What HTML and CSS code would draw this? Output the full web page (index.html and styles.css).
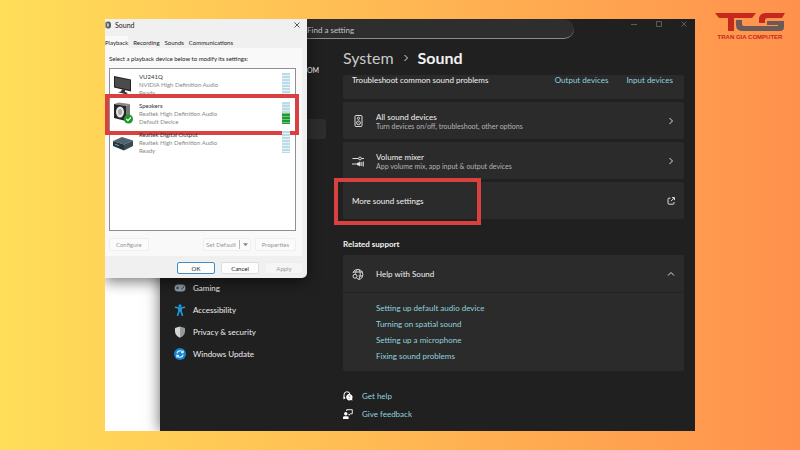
FILE: index.html
```
<!DOCTYPE html>
<html lang="en">
<head>
	<meta charset="utf-8">
	<title>More sound settings</title>
	<link rel="stylesheet" href="styles.css">
</head>
<body>
	<div class="desktop">
		<!-- settings window -->
		<div class="settings">
			<div class="titlebar">
				<input type="text" class="search" placeholder="Find a setting" aria-label="Find a setting">
				<div class="controls">
					<button type="button" aria-label="Minimize"><svg viewBox="0 0 8 8"><path d="M1 4.5h6"/></svg></button>
					<button type="button" aria-label="Maximize"><svg viewBox="0 0 8 8"><path d="M1.5 1.5h5v5h-5z"/></svg></button>
					<button type="button" aria-label="Close"><svg viewBox="0 0 8 8"><path d="M1.5 1.5l5 5M6.5 1.5l-5 5"/></svg></button>
				</div>
			</div>
			<div class="columns">
				<div class="sidebar">
					<div class="account">OM</div>
					<div class="selected"></div>
					<nav class="menu">
						<a href="#"><svg viewBox="0 0 12 12"><rect x="0.5" y="2.5" width="11" height="7" rx="3.5" fill="#8d99a5"/><path d="M2.3 6h2.4M3.5 4.8v2.4" stroke="#2c3640" fill="none"/><circle cx="8" cy="6.8" r="0.7" fill="#2c3640"/><circle cx="9.3" cy="5.2" r="0.7" fill="#2c3640"/></svg>Gaming</a>
						<a href="#"><svg viewBox="0 0 12 12"><circle cx="6" cy="1.7" r="1.5" fill="#2196dc"/><path d="M1.6 3.3L6 4.4l4.4-1.1M6 4v3M4.9 4.5v3L3.6 11.2M7.1 4.5v3l1.3 3.7" stroke="#2196dc" stroke-width="1.7" stroke-linecap="round" fill="none"/></svg>Accessibility</a>
						<a href="#"><svg viewBox="0 0 12 12"><path d="M6 0.5L11 2v3.6C11 8.5 8.8 10.6 6 11.8z" fill="#96999b"/><path d="M6 0.5L1 2v3.6C1 8.5 3.2 10.6 6 11.8z" fill="#d2d5d6"/></svg>Privacy &amp; security</a>
						<a href="#"><svg viewBox="0 0 12 12"><circle cx="6" cy="6" r="6" fill="#1283d0"/><path d="M2.9 5.4a3.2 3.2 0 0 1 5.8-1.2M9.1 2.6v2H7.1M9.1 6.6a3.2 3.2 0 0 1-5.8 1.2M2.9 9.4v-2h2" stroke="#d8f1ff" stroke-width="1.2" fill="none"/></svg>Windows Update</a>
					</nav>
				</div>
				<div class="main">
					<h1 class="head"><span>System</span><svg viewBox="0 0 8 8"><path d="M2.5 1l3 3-3 3"/></svg><b>Sound</b></h1>
					<div class="cards">
						<div class="card trouble">
							<span class="grow">Troubleshoot common sound problems</span>
							<a href="#">Output devices</a>
							<a href="#">Input devices</a>
						</div>
						<div class="card">
							<svg class="icon" viewBox="0 0 12 12"><rect x="3" y="0.5" width="7" height="11" rx="1"/><circle cx="6.5" cy="3.3" r="1.1"/><circle cx="6.5" cy="7.8" r="1.9"/><path d="M6.5 7.5v.6"/></svg>
							<div class="grow"><div>All sound devices</div><div class="sub">Turn devices on/off, troubleshoot, other options</div></div>
							<svg class="arrow" viewBox="0 0 8 8"><path d="M2.5 1l3 3-3 3"/></svg>
						</div>
						<div class="card">
							<svg class="icon" viewBox="0 0 12 12"><path d="M0.5 3.5h6M9.5 3.5h2.5M0 9h5"/><circle cx="8" cy="3.5" r="1.4"/><path d="M5.5 8h1L8 7v4L6.5 10h-1z" fill="#eee"/><path d="M9.8 7v4M11.3 6.5v5"/></svg>
							<div class="grow"><div>Volume mixer</div><div class="sub">App volume mix, app input &amp; output devices</div></div>
							<svg class="arrow" viewBox="0 0 8 8"><path d="M2.5 1l3 3-3 3"/></svg>
						</div>
						<div class="card more">
							<span class="grow">More sound settings</span>
							<svg class="arrow" viewBox="0 0 8 8"><path d="M3.5 1.2H2q-1 0-1 1v4q0 1 1 1h4q1 0 1-1V5M5 .6h2.5v2.5M7.3.8L4 4.2"/></svg>
							<div class="mark mark-more"></div>
						</div>
					</div>
					<h2 class="related">Related support</h2>
					<div class="help">
						<div class="card">
							<svg class="icon" viewBox="0 0 12 12"><path d="M1 5a5 5 0 1 1 5.5 6.5M6 1C3.8 2.8 3.6 4.5 3.6 5.5M6.2 1c2.4 2 2.8 6.5.5 10.4M1.3 4h9.6M6.5 8h4.5"/><circle cx="3" cy="8.2" r="2"/><path d="M4.5 9.7l1.8 1.8"/></svg>
							<span class="grow">Help with Sound</span>
							<svg class="arrow" viewBox="0 0 8 8"><path d="M1 5.5l3-3 3 3"/></svg>
						</div>
						<div class="links">
							<a href="#">Setting up default audio device</a>
							<a href="#">Turning on spatial sound</a>
							<a href="#">Setting up a microphone</a>
							<a href="#">Fixing sound problems</a>
						</div>
					</div>
					<div class="bottom">
						<a href="#"><svg viewBox="0 0 10 10"><path d="M1 7.5V4a3 3 0 0 1 6-.5" fill="none" stroke="#fff"/><path d="M0.5 8.5l.2-3 2 1.5z" fill="#fff"/><path d="M6.2 3a3.2 3.2 0 1 0 1.7 6l1.6.5-.4-1.7A3.2 3.2 0 0 0 6.2 3z" fill="#fff"/><path d="M5.6 5q1.3-.6 1.2.5l-.6.7M6.2 7.4v.6" stroke="#333" stroke-width=".6" fill="none"/></svg>Get help</a>
						<a href="#"><svg viewBox="0 0 10 10"><circle cx="2.8" cy="4.8" r="1.7" fill="#fff"/><path d="M0 10V8.5Q0 7.2 1.3 7.2h3q1.3 0 1.3 1.3V10z" fill="#fff"/><path d="M3.7 2V.7h5.6v4.1H7.5L6 6.2V4.8" fill="none" stroke="#fff" stroke-width=".9"/></svg>Give feedback</a>
					</div>
				</div>
			</div>
		</div>

		<!-- sound dialog -->
		<div class="dialog">
			<div class="dialog-title">
				<svg viewBox="0 0 8 8"><path d="M0 1l3-.5v7L0 7z" fill="#aaa"/><ellipse cx="3.5" cy="4" rx="2.5" ry="3.5" fill="#555"/><ellipse cx="3" cy="4" rx="1" ry="2" fill="#ccc"/></svg>
				<span class="grow">Sound</span>
				<button type="button" class="close" aria-label="Close"><svg viewBox="0 0 8 8"><path d="M1.5 1.5l5 5M6.5 1.5l-5 5"/></svg></button>
			</div>
			<div class="tabs">
				<button type="button" class="active">Playback</button>
				<button type="button">Recording</button>
				<button type="button">Sounds</button>
				<button type="button">Communications</button>
			</div>
			<div class="panel">
				<p>Select a playback device below to modify its settings:</p>
				<div class="devices">
					<div class="device">
						<svg viewBox="0 0 20 22"><path d="M1 3l17 3.5v12L1 14.5z" fill="#222"/><path d="M2 4.3l15 3v9.8L2 13.5z" fill="#4b4b4b"/><path d="M9 16.2l3 .8v2l3 1-2 1.2-8-2 3-.7z" fill="#333"/></svg>
						<div class="grow"><b>VU241Q</b><br>NVIDIA High Definition Audio<br>Ready</div>
						<div class="meter"></div>
					</div>
					<div class="device">
						<svg viewBox="0 0 20 22"><path d="M1 2L6 .5l11 1.5L13 4z" fill="#888"/><path d="M13 4l4-2v14l-4 3z" fill="#777"/><path d="M1 2l12 2v15L1 16z" fill="#252525"/><ellipse cx="7" cy="10" rx="4" ry="5.5" fill="#e2e2e2"/><ellipse cx="7" cy="10" rx="2" ry="3" fill="#aaa"/><circle cx="15.5" cy="17" r="4.5" fill="#1b9a2c"/><path d="M13.3 17l1.6 1.7 3-3.2" stroke="#fff" stroke-width="1.2" fill="none"/></svg>
						<div class="grow"><b>Speakers</b><br>Realtek High Definition Audio<br>Default Device</div>
						<div class="meter playing"></div>
						<div class="mark mark-device"></div>
					</div>
					<div class="device">
						<svg viewBox="0 0 20 22"><path d="M0 10l9-4 11 3.5-9 4z" fill="#52636e"/><path d="M0 10l11 3.5v6L0 15z" fill="#26343d"/><path d="M11 13.5l9-4V15l-9 4.5z" fill="#3a4b56"/><path d="M2 13.2l4 1.5" stroke="#58a9c8"/></svg>
						<div class="grow"><b>Realtek Digital Output</b><br>Realtek High Definition Audio<br>Ready</div>
						<div class="meter"></div>
					</div>
				</div>
				<div class="actions">
					<button type="button" disabled>Configure</button>
					<span class="grow"></span>
					<button type="button" class="split" disabled>Set Default <i></i><svg viewBox="0 0 6 4"><path d="M0 0h6L3 3.5z"/></svg></button>
					<button type="button" disabled>Properties</button>
				</div>
			</div>
			<div class="dialog-footer">
				<button type="button" class="ok">OK</button>
				<button type="button">Cancel</button>
				<button type="button" disabled>Apply</button>
			</div>
		</div>
	</div>

	<div class="logo">
		<svg viewBox="0 0 70 19"><path d="M0 0h41l-4 5H19v13h-6V5H4z" fill="#c5281c"/><path d="M70 0H51q-6 0-7 5v5h6V7q0-2 3-2h14z" fill="#c5281c"/><path d="M21 7h6v4q0 2 2 2h34v-1H52V8h17v6q0 4-4 4H28q-7 0-7-6z" fill="#6b5a55"/></svg>
		<span>TRAN GIA COMPUTER</span>
	</div>
</body>
</html>
```

FILE: styles.css
```
*{
	box-sizing:border-box;
}
body{
	margin:0;
	min-height:100vh;
	display:grid;
	grid-template-columns:105px 1fr 105px;
	padding:19px 0;
	background:linear-gradient(90deg, #ffde59, #ff914d);
	font-family:Lato, "Open Sans", sans-serif;
	font-size:8px;
	line-height:10px;
}
a{
	color:#8fd3df;
	text-decoration:none;
}
button{
	font:inherit;
	padding:0;
	border:none;
	background:none;
}
svg{
	flex:none;
}
.grow{
	flex:1;
}
.desktop{
	grid-column:2;
	position:relative;
	overflow:hidden;
	background:#fff;
}

/* settings window */
.settings{
	min-height:100%;
	margin-left:55px;
	background:#202020;
	color:#f2f2f2;
	box-shadow:0 0 14px rgba(0,0,0,0.6);
}
.titlebar{
	display:flex;
	align-items:flex-start;
	justify-content:space-between;
}
.search{
	flex:0 1 374px;
	min-width:0;
	height:20px;
	margin-left:40px;
	padding:2px 0 0 107px;
	border:none;
	border-bottom:1px solid #8a8a8a;
	border-radius:0 10px 10px 0;
	background:#2e2e2e;
	color:#ccc;
	font:inherit;
}
.search::placeholder{
	color:#c4c4c4;
}
.controls{
	display:flex;
	gap:17px;
	padding:1px 7px 0 0;
}
.controls svg{
	display:block;
	width:8px;
	height:8px;
	fill:none;
	stroke:#777;
	stroke-width:0.7;
}
.columns{
	display:grid;
	grid-template-columns:166px 1fr;
	gap:17px;
	padding-right:11px;
}
.account{
	margin-top:26px;
	padding-right:7px;
	text-align:right;
	font-size:7px;
}
.selected{
	height:20px;
	margin:44px 0 0 10px;
	border-radius:3px;
	background:#2d2d2d;
}
.menu{
	display:flex;
	flex-direction:column;
	margin-top:138px;
	padding-left:14px;
}
.menu a{
	display:flex;
	align-items:center;
	gap:7px;
	height:22px;
	color:#eee;
}
.menu svg{
	width:12px;
	height:12px;
}
.head{
	display:flex;
	align-items:center;
	gap:8px;
	margin:9px 0 7px;
	font-size:16px;
	line-height:20px;
	font-weight:normal;
}
.head span{
	color:#c8c8c8;
}
.head svg{
	width:8px;
	height:8px;
}
.head svg, .arrow, .icon{
	fill:none;
	stroke:#ddd;
}
.cards{
	display:grid;
	gap:3px;
}
.card{
	position:relative;
	display:flex;
	align-items:center;
	min-height:37px;
	padding:0 9px;
	border-radius:2px;
	background:#2b2b2b;
}
.trouble{
	min-height:24px;
	align-items:flex-start;
	gap:18px;
	padding-right:11px;
}
.icon{
	width:12px;
	height:12px;
	margin-right:12px;
}
.arrow{
	width:8px;
	height:8px;
}
.sub{
	color:#b5b5b5;
	font-size:7px;
	line-height:8px;
}
.related{
	margin:20px 0 6px;
	font-size:8px;
	line-height:10px;
}
.help{
	border-radius:2px;
	background:#2b2b2b;
}
.help .card{
	min-height:38px;
	border-bottom:1px solid #232323;
}
.links{
	display:flex;
	flex-direction:column;
	align-items:flex-start;
	gap:6px;
	padding:10px 33px;
}
.bottom{
	display:flex;
	flex-direction:column;
	align-items:flex-start;
	gap:8px;
	padding:20px 0 10px;
}
.bottom a{
	display:flex;
	align-items:center;
	gap:9px;
}
.bottom svg{
	width:10px;
	height:10px;
}

/* red frames */
.mark{
	position:absolute;
	border:4px solid #d94141;
	pointer-events:none;
}
.mark-more{
	left:-9px;
	top:-4px;
	width:147px;
	height:47px;
}
.mark-device{
	left:-5px;
	right:-4px;
	top:-4px;
	height:41px;
}

/* sound dialog */
.dialog{
	position:absolute;
	left:0;
	top:0;
	width:202px;
	border-radius:0 0 5px 0;
	background:#f0f0f0;
	box-shadow:0 4px 14px rgba(0,0,0,0.5);
	color:#222;
	font-size:6px;
	line-height:7px;
}
.dialog-title{
	display:flex;
	align-items:center;
	gap:2px;
	height:12px;
	padding-right:6px;
	font-size:7px;
}
.dialog-title svg{
	display:block;
	width:8px;
	height:8px;
}
.close svg{
	fill:none;
	stroke:#333;
	stroke-width:0.8;
}
.tabs{
	display:flex;
	align-items:flex-end;
	gap:5px;
	height:17px;
}
.tabs button{
	height:11px;
	color:#222;
}
.tabs .active{
	height:12px;
	background:#f9f9f9;
}
.panel{
	margin-right:5px;
	padding:7px 6px 5px 4px;
	background:#f9f9f9;
}
.panel p{
	margin:0 0 6px;
}
.devices{
	min-height:163px;
	border:1px solid #8c8f94;
	background:#fff;
}
.device{
	position:relative;
	display:flex;
	gap:6px;
	height:29px;
	padding:4px 5px 0 3px;
	color:#888;
	line-height:8px;
}
.device b{
	color:#333;
	font-weight:normal;
}
.device svg{
	width:20px;
	height:22px;
}
.meter{
	width:8px;
	height:22px;
	background:repeating-linear-gradient(#bcdbe8 0 2px, #e9f4f8 2px 3px);
}
.playing{
	background:repeating-linear-gradient(transparent 0 2px, rgba(255,255,255,0.4) 2px 3px), linear-gradient(#bcdbe8 50%, #1d9a31 50%);
}
.actions{
	display:flex;
	gap:4px;
	margin-top:7px;
}
.actions button{
	height:13px;
	padding:0 6px;
	border:1px solid #efefef;
	border-radius:2px;
	background:#fbfbfb;
	color:#999;
}
.actions .split{
	display:flex;
	align-items:center;
	gap:3px;
	padding:0 2px;
}
.split i{
	width:1px;
	height:9px;
	background:#bbb;
}
.split svg{
	width:5px;
	height:4px;
	fill:#888;
}
.dialog-footer{
	display:flex;
	justify-content:flex-end;
	gap:6px;
	padding:6px 4px 4px;
}
.dialog-footer button{
	width:38px;
	height:12px;
	border:1px solid #ddd;
	border-radius:2px;
	background:#fdfdfd;
	color:#222;
}
.dialog-footer .ok{
	border-color:#3f8fc6;
}
.dialog-footer button:disabled{
	border-color:#eee;
	background:#f5f5f5;
	color:#999;
}

/* logo */
.logo{
	position:absolute;
	top:13px;
	right:15px;
	display:flex;
	flex-direction:column;
	align-items:center;
	color:#c5281c;
	font-family:"Liberation Sans Narrow", "Liberation Sans", sans-serif;
	font-size:6px;
	font-weight:bold;
	white-space:nowrap;
}
.logo svg{
	width:70px;
	height:19px;
}
```
